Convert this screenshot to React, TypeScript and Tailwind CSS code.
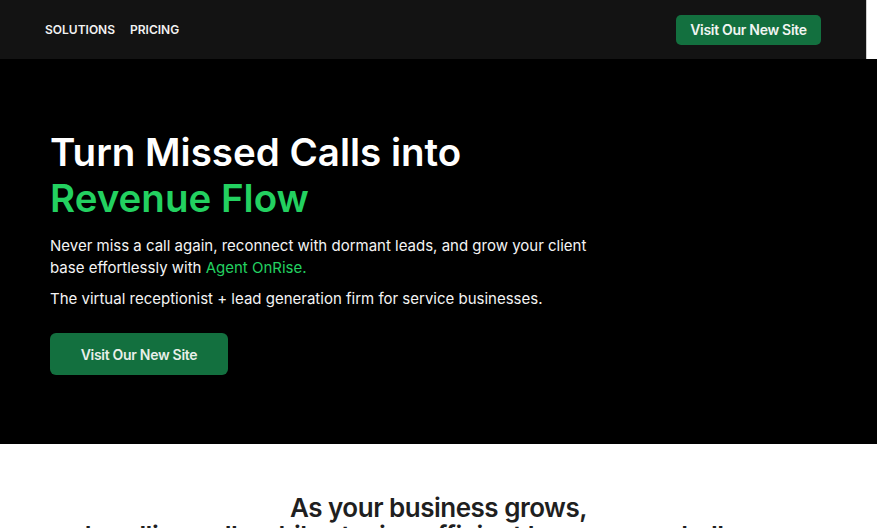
import React from "react";

const font = { fontFamily: "Inter, Lato, sans-serif" };

function VisitButton({ big }: { big?: boolean }) {
  return (
    <a
      href="#"
      className={
        big
          ? "inline-flex items-center justify-center w-[178px] h-[42px] rounded-[6px] bg-[#13703f] text-[14px] font-semibold text-[#e8efe9] tracking-[-0.3px]"
          : "inline-flex items-center justify-center w-[145px] h-[30px] rounded-[5px] bg-[#13703f] text-[14px] font-semibold text-[#f1f5f2] tracking-[-0.3px]"
      }
    >
      Visit Our New Site
    </a>
  );
}

export default function App() {
  return (
    <div className="min-h-screen bg-white" style={font}>
      <div className="flex">
        <header className="w-[866px] h-[59px] bg-[#131313] flex items-center justify-between pl-[45px] pr-[45px]">
          <nav className="flex items-center gap-[15px] text-[12px] font-semibold text-[#f2f2f2]">
            <a href="#">SOLUTIONS</a>
            <a href="#">PRICING</a>
          </nav>
          <VisitButton />
        </header>
        <div className="flex-1 h-[59px] bg-white border-l border-[#cfcfcf]" />
      </div>

      <section className="bg-black h-[385px] pl-[50px] pt-[70px]">
        <h1 className="text-[38.5px] leading-[46px] font-semibold text-white">
          Turn Missed Calls into
          <br />
          <span className="text-[#23d160]">Revenue Flow</span>
        </h1>
        <p className="mt-[14px] w-[560px] text-[15px] leading-[22px] text-[#f4f4f4]">
          Never miss a call again, reconnect with dormant leads, and grow your client base
          effortlessly with <span className="text-[#23d160]">Agent OnRise.</span>
        </p>
        <p className="mt-[9px] text-[15px] leading-[22px] text-[#f4f4f4]">
          The virtual receptionist + lead generation firm for service businesses.
        </p>
        <div className="mt-[23px]">
          <VisitButton big />
        </div>
      </section>

      <section className="bg-white pt-[50px] text-center">
        <h2 className="text-[26px] leading-[28px] font-semibold text-[#1f1f1f] tracking-[-0.5px]">
          As your business grows,
          <br />
          handling calls while staying efficient becomes a challenge.
        </h2>
      </section>
    </div>
  );
}
